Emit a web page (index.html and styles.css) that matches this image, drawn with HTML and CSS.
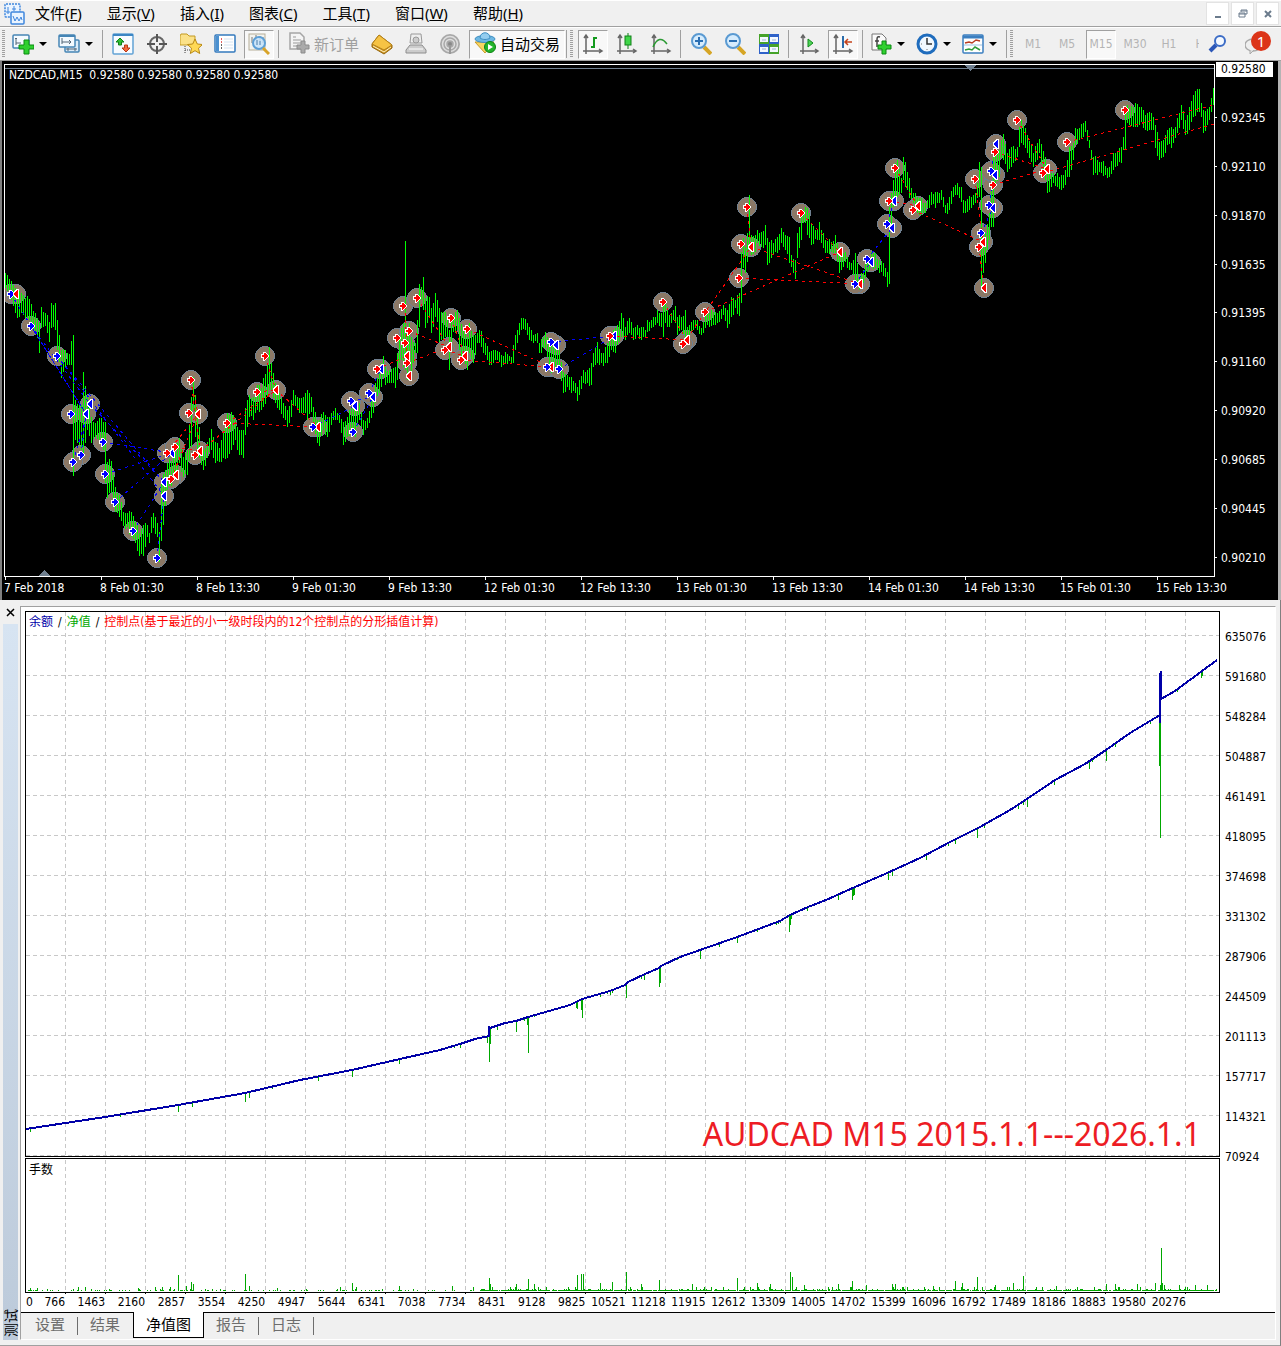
FILE: index.html
```html
<!DOCTYPE html>
<html lang="zh-CN">
<head>
  <meta charset="UTF-8" />
  <meta name="viewport" content="width=device-width, initial-scale=1.0" />
  <title>NZDCAD,M15</title>
  <link rel="stylesheet" href="styles.css">
</head>
<body>

  <!-- Menu -->
  <header class="menubar">
    <svg class="app-icon" viewBox="0 0 22 22" width="22" height="22">
      <rect x="1" y="1" width="15" height="13" rx="1" fill="#eaf4ff" stroke="#3f86dd" stroke-width="1.5" stroke-dasharray="2 1"/>
      <path d="M4 4v7M2 9h4M10 3v5M8 6h4" stroke="#3f86dd" fill="none"/>
      <rect x="7" y="9" width="13" height="12" rx="1" fill="#eaf4ff" stroke="#3f86dd" stroke-width="1.5"/>
      <path d="M9 13l2 5 2-4 2 4 2-4 1 3" stroke="#3f86dd" fill="none"/>
    </svg>
    <nav class="menu">
      <a href="#">文件(<u>F</u>)</a>
      <a href="#">显示(<u>V</u>)</a>
      <a href="#">插入(<u>I</u>)</a>
      <a href="#">图表(<u>C</u>)</a>
      <a href="#">工具(<u>T</u>)</a>
      <a href="#">窗口(<u>W</u>)</a>
      <a href="#">帮助(<u>H</u>)</a>
    </nav>
    <div class="win-buttons">
      <button aria-label="最小化"><svg viewBox="0 0 12 12" width="12" height="12"><path d="M3 9h6" stroke="#6b7b8c" stroke-width="2"/></svg></button>
      <button aria-label="还原"><svg viewBox="0 0 12 12" width="12" height="12"><path d="M4 4V2h6v4H8M2 5h6v4H2zM2 6h6M4 3h6" stroke="#6b7b8c" fill="none"/></svg></button>
      <button aria-label="关闭"><svg viewBox="0 0 12 12" width="12" height="12"><path d="M3 3l6 6M9 3l-6 6" stroke="#6b7b8c" stroke-width="2"/></svg></button>
    </div>
  </header>

  <!-- Toolbar -->
  <div class="toolbar">
    <span class="grip"></span>
    <button class="tool drop" aria-label="新图表">
      <svg viewBox="0 0 22 22" width="22" height="22"><rect x="1" y="2" width="16" height="13" rx="1" fill="#f4faff" stroke="#4585b5" stroke-width="1.5"/><path d="M4 5v7M3 6l1-1 1 1M4 10h5" stroke="#567" fill="none"/><path d="M12 7h5v5h5v4h-5v5h-5v-5H7v-4h5z" fill="#2fd02f" stroke="#0b8a12"/></svg>
      <i class="caret"></i>
    </button>
    <button class="tool drop" aria-label="图表组">
      <svg viewBox="0 0 22 22" width="22" height="22"><rect x="7" y="7" width="14" height="12" rx="1" fill="#dcecf9" stroke="#4585b5" stroke-width="1.5"/><rect x="1" y="2" width="16" height="12" rx="1" fill="#f4faff" stroke="#4585b5" stroke-width="1.5"/><path d="M1 3h16" stroke="#4585b5" stroke-width="2"/><path d="M4 5v6M4 9h9M11 7l2 2-2 2M8 16h11M10 15v3M17 15v3" stroke="#567" fill="none"/></svg>
      <i class="caret"></i>
    </button>
    <span class="sep"></span>
    <button class="tool" aria-label="市场报价">
      <svg viewBox="0 0 22 22" width="22" height="22"><rect x="1" y="1" width="20" height="20" rx="1" fill="#f7fbff" stroke="#62a2d5" stroke-width="1.5"/><path d="M1 2h20" stroke="#3c86c4" stroke-width="2"/><path d="M8 5l4 4H9.500v3h-3V9H4z" fill="#2fbf35" stroke="#12801a"/><path d="M14 19l-4-4h2.500v-3h3v3H18z" fill="#f4683c" stroke="#b83a17"/></svg>
    </button>
    <button class="tool" aria-label="数据窗口">
      <svg viewBox="0 0 22 22" width="22" height="22"><circle cx="11" cy="11" r="7" fill="none" stroke="#666" stroke-width="2"/><path d="M11 1v8M11 13v8M1 11h8M13 11h8" stroke="#555" stroke-width="2"/></svg>
    </button>
    <button class="tool" aria-label="导航">
      <svg viewBox="0 0 22 22" width="22" height="22"><path d="M0 3l1-2h6l2 2h6v9H0z" fill="#fbe188" stroke="#c39a22"/><path d="M5 13v8M5 17h5" stroke="#444" stroke-dasharray="1 1"/><path d="M15 6l2.300 5 5.200.5-4 3.700 1.200 5.300-4.700-2.800-4.700 2.800 1.200-5.300-4-3.700 5.200-.5z" fill="#ffd955" stroke="#b98a15"/></svg>
    </button>
    <button class="tool" aria-label="终端">
      <svg viewBox="0 0 22 22" width="22" height="22"><rect x="1" y="2" width="20" height="17" rx="1" fill="#fff" stroke="#3379bd" stroke-width="1.500"/><path d="M2 3h3v15H2z" fill="#4a90d0"/><path d="M7 6h1M7 9h1" stroke="#e03030" stroke-width="1.500"/><path d="M7 12h1M7 15h1" stroke="#333" stroke-width="1.500"/><path d="M10 6h9M10 9h9M10 12h9M10 15h9" stroke="#d5e4f2"/></svg>
    </button>
    <button class="tool pressed" aria-label="策略测试">
      <svg viewBox="0 0 22 22" width="22" height="22"><rect x="1" y="1" width="16" height="16" fill="#f3f3ee" stroke="#b5ae98"/><path d="M4 4v6M8 2v5M12 3v5M15 4v6" stroke="#777"/><circle cx="11" cy="10" r="6" fill="#c4e2fa" fill-opacity=".85" stroke="#5d9fd6" stroke-width="2"/><path d="M9 7v5M12 8v4" stroke="#4a7da8"/><path d="M15 15l6 6" stroke="#d8a42a" stroke-width="3"/></svg>
    </button>
    <span class="sep"></span>
    <button class="tool order" disabled>
      <svg viewBox="0 0 22 22" width="22" height="22"><path d="M2 1h10l4 4v12H2z" fill="#f4f4f4" stroke="#a5a5a5" stroke-width="1.500"/><path d="M5 5h3M5 8h8M5 11h8M5 14h5" stroke="#999"/><path d="M13 9h4v4h4v4h-4v4h-4v-4H9v-4h4z" fill="#aaa" stroke="#8b8b8b"/></svg>
      新订单
    </button>
    <button class="tool" aria-label="MetaEditor">
      <svg viewBox="0 0 22 22" width="22" height="22"><path d="M1 11L8 2l13 10v3l-8 6L1 14z" fill="#c98f1c" stroke="#96670d"/><path d="M1 11L8 2l13 10-8 5z" fill="#f6c344" stroke="#b5821a"/><path d="M2 13l11 6 7-5" stroke="#fff3c2" fill="none"/></svg>
    </button>
    <button class="tool" aria-label="选项" disabled>
      <svg viewBox="0 0 22 22" width="22" height="22"><path d="M6 1h10l1 9H5z" fill="#eee" stroke="#999"/><circle cx="11" cy="7" r="3" fill="#ccc" stroke="#999"/><path d="M5 12h12l4 5v3H1v-3z" fill="#ccc" stroke="#8e8e8e"/><path d="M4 16h14" stroke="#fff"/></svg>
    </button>
    <button class="tool" aria-label="信号" disabled>
      <svg viewBox="0 0 22 22" width="22" height="22"><circle cx="11" cy="11" r="10" fill="#a8a8a8"/><g fill="none" stroke="#dedede" stroke-width="1.500"><circle cx="11" cy="11" r="7.500"/><circle cx="11" cy="11" r="4.500"/></g><circle cx="11" cy="11" r="2" fill="#888"/><path d="M11 12v9" stroke="#999" stroke-width="2"/></svg>
    </button>
    <button class="tool pressed auto">
      <svg viewBox="0 0 22 22" width="22" height="22"><path d="M1 10l10 11 9-11z" fill="#f8d562" stroke="#c89a28"/><ellipse cx="11" cy="7" rx="10" ry="3.500" fill="#6db7e2" stroke="#3f8fc2"/><path d="M6 6c0-7 10-7 10 0-3 2-7 2-10 0z" fill="#93cdef" stroke="#3f8fc2"/><circle cx="16" cy="15" r="5.500" fill="#23b52b" stroke="#0d8314"/><path d="M14 12l5 3-5 3z" fill="#fff"/></svg>
      自动交易
    </button>
    <span class="sep tight"></span>
    <span class="grip"></span>
    <button class="tool pressed" aria-label="柱状图">
      <svg viewBox="0 0 22 22" width="22" height="22"><path d="M4 2v19M1 18h19M2 5l2-3 2 3M17 16l3 2-3 2" stroke="#666" stroke-width="1.500" fill="none"/><path d="M12 4v11M12 5h3M9 14h3" stroke="#159a1f" stroke-width="2"/></svg>
    </button>
    <button class="tool" aria-label="阴阳烛">
      <svg viewBox="0 0 22 22" width="22" height="22"><path d="M4 2v19M1 18h19M2 5l2-3 2 3M17 16l3 2-3 2" stroke="#666" stroke-width="1.500" fill="none"/><path d="M12 0v16" stroke="#118018"/><rect x="9" y="3" width="6" height="9" fill="#3fd548" stroke="#118018"/></svg>
    </button>
    <button class="tool" aria-label="折线图">
      <svg viewBox="0 0 22 22" width="22" height="22"><path d="M4 2v19M1 18h19M2 5l2-3 2 3M17 16l3 2-3 2" stroke="#666" stroke-width="1.500" fill="none"/><path d="M3 14c4-9 9-10 14-3" stroke="#2b9a33" stroke-width="1.500" fill="none"/></svg>
    </button>
    <span class="sep"></span>
    <button class="tool" aria-label="放大">
      <svg viewBox="0 0 22 22" width="22" height="22"><path d="M14 14l7 7" stroke="#d6a525" stroke-width="4"/><circle cx="9" cy="8" r="7" fill="#d6ecfd" stroke="#5a9ad2" stroke-width="2"/><path d="M5 8h8M9 4v8" stroke="#2a6fb3" stroke-width="2"/></svg>
    </button>
    <button class="tool" aria-label="缩小">
      <svg viewBox="0 0 22 22" width="22" height="22"><path d="M14 14l7 7" stroke="#d6a525" stroke-width="4"/><circle cx="9" cy="8" r="7" fill="#d6ecfd" stroke="#5a9ad2" stroke-width="2"/><path d="M5 8h8" stroke="#2a6fb3" stroke-width="2"/></svg>
    </button>
    <button class="tool" aria-label="平铺窗口">
      <svg viewBox="0 0 22 22" width="22" height="22"><path d="M1 1h10v10H1zM11 11h10v10H11z" fill="#46a329"/><path d="M11 1h10v10H11zM1 11h10v10H1z" fill="#2f62c9"/><path d="M2 4h8v5H2zM12 4h8v5h-8zM2 14h8v5H2zM12 14h8v5h-8z" fill="#f4f9ff"/><path d="M4 7h4M14 7h4M4 16h4M14 16h4" stroke="#9bb5d3"/></svg>
    </button>
    <span class="sep"></span>
    <button class="tool" aria-label="自动滚动">
      <svg viewBox="0 0 22 22" width="22" height="22"><path d="M5 2v19M2 18h18M3 5l2-3 2 3M17 16l3 2-3 2" stroke="#666" stroke-width="1.500" fill="none"/><path d="M10 6l5 4-5 4z" fill="#4fd658" stroke="#118a1b"/></svg>
    </button>
    <button class="tool pressed" aria-label="图表平移">
      <svg viewBox="0 0 22 22" width="22" height="22"><path d="M4 2v19M1 18h19M2 5l2-3 2 3M17 16l3 2-3 2" stroke="#666" stroke-width="1.500" fill="none"/><path d="M11 3v12" stroke="#2b6cab" stroke-width="2"/><path d="M20 9h-6M16 6l-3 3 3 3" stroke="#c4431c" stroke-width="1.500" fill="none"/></svg>
    </button>
    <span class="sep"></span>
    <button class="tool drop" aria-label="指标列表">
      <svg viewBox="0 0 22 22" width="22" height="22"><path d="M2 1h10l4 4v12H2z" fill="#fafafa" stroke="#777"/><path d="M10 4c-3-1-3 1-3 3v7M5 8h4" stroke="#444" stroke-width="1.500" fill="none"/><path d="M12 8h4v4h5v4h-5v5h-4v-5H8v-4h4z" fill="#2fd02f" stroke="#0b8a12"/></svg>
      <i class="caret"></i>
    </button>
    <button class="tool drop" aria-label="时段">
      <svg viewBox="0 0 22 22" width="22" height="22"><circle cx="11" cy="11" r="9" fill="#f2f8fd" stroke="#1f6cbd" stroke-width="3"/><path d="M11 5v6h5" stroke="#333" stroke-width="1.500" fill="none"/><path d="M5 11h1M11 16v1" stroke="#777"/></svg>
      <i class="caret"></i>
    </button>
    <button class="tool drop" aria-label="模板">
      <svg viewBox="0 0 22 22" width="22" height="22"><rect x="1" y="2" width="20" height="18" rx="1" fill="#fff" stroke="#3b7fc0" stroke-width="1.500"/><path d="M1 4h20" stroke="#3b7fc0" stroke-width="3"/><path d="M3 10l4-1 3 1 4-3 4 1" stroke="#b93c22" stroke-width="1.500" fill="none"/><path d="M2 12h18" stroke="#9cc0e0"/><path d="M3 17l4-1 3 1 3-3 5 3" stroke="#2e9b38" stroke-width="1.500" fill="none"/></svg>
      <i class="caret"></i>
    </button>
    <span class="sep"></span>
    <span class="grip"></span>
    <div class="periods">
      <button class="tool period">M1</button>
      <button class="tool period">M5</button>
      <button class="tool period pressed">M15</button>
      <button class="tool period">M30</button>
      <button class="tool period">H1</button>
      <button class="tool period">H4</button>
    </div>
    <div class="tool-end">
      <button class="tool" aria-label="搜索">
        <svg viewBox="0 0 22 22" width="22" height="22"><path d="M9 12l-6 6" stroke="#2c57b8" stroke-width="4"/><circle cx="13" cy="8" r="5" fill="#f4f9ff" stroke="#3c6cc6" stroke-width="2"/></svg>
      </button>
      <button class="tool chat" aria-label="消息">
        <svg viewBox="0 0 22 22" width="22" height="22"><ellipse cx="8" cy="12" rx="8" ry="6" fill="#eee" stroke="#aaa" stroke-width="1.500"/><path d="M5 17v4l4-4" fill="#ddd" stroke="#aaa"/></svg>
        <span class="badge">1</span>
      </button>
    </div>
  </div>

  <!-- Price chart -->
  <main class="chart">
    <div class="chart-title">NZDCAD,M15&nbsp; 0.92580 0.92580 0.92580 0.92580</div>
    <svg id="price" class="plot" viewBox="4 61 1211 519"></svg>
    <div class="price-axis">
      <span class="current">0.92580</span><span>0.92345</span><span>0.92110</span><span>0.91870</span><span>0.91635</span><span>0.91395</span><span>0.91160</span><span>0.90920</span><span>0.90685</span><span>0.90445</span><span>0.90210</span>
    </div>
    <div class="time-axis">
      <span>7 Feb 2018</span><span>8 Feb 01:30</span><span>8 Feb 13:30</span><span>9 Feb 01:30</span><span>9 Feb 13:30</span><span>12 Feb 01:30</span><span>12 Feb 13:30</span><span>13 Feb 01:30</span><span>13 Feb 13:30</span><span>14 Feb 01:30</span><span>14 Feb 13:30</span><span>15 Feb 01:30</span><span>15 Feb 13:30</span>
    </div>
  </main>

  <!-- Strategy tester -->
  <section class="tester">
    <aside class="side">
      <button class="close" aria-label="关闭"><svg viewBox="0 0 10 10" width="10" height="10"><path d="M1 1l7 7M8 1l-7 7" stroke="#000" stroke-width="1.500"/></svg></button>
      <div class="side-title"><span>测试</span></div>
    </aside>
    <div class="panel">
      <div class="graph">
        <div class="legend"><span class="balance">余额</span><i>/</i><span class="equity">净值</span><i>/</i><span class="control">控制点(基于最近的小一级时段内的12个控制点的分形插值计算)</span></div>
        <svg id="equity" class="plot" viewBox="21 607 1199 688"></svg>
        <div class="lots">手数</div>
        <div class="caption">AUDCAD M15 2015.1.1---2026.1.1</div>
        <div class="value-axis">
          <span>635076</span><span>591680</span><span>548284</span><span>504887</span><span>461491</span><span>418095</span><span>374698</span><span>331302</span><span>287906</span><span>244509</span><span>201113</span><span>157717</span><span>114321</span><span>70924</span>
        </div>
        <div class="trade-axis">
          <span class="first"><b>0</b><b>766</b></span><span>1463</span><span>2160</span><span>2857</span><span>3554</span><span>4250</span><span>4947</span><span>5644</span><span>6341</span><span>7038</span><span>7734</span><span>8431</span><span>9128</span><span>9825</span><span>10521</span><span>11218</span><span>11915</span><span>12612</span><span>13309</span><span>14005</span><span>14702</span><span>15399</span><span>16096</span><span>16792</span><span>17489</span><span>18186</span><span>18883</span><span>19580</span><span>20276</span>
        </div>
      </div>
      <nav class="tabs">
        <button>设置</button>
        <button>结果</button>
        <button class="active">净值图</button>
        <button>报告</button>
        <button>日志</button>
      </nav>
    </div>
  </section>

  <script src="charts.js"></script>
</body>
</html>
```
FILE: styles.css
```css
* {
  box-sizing: border-box;
}

body {
  margin: 0;
  background: #f0f0f0;
  color: #000;
  font-family: "Noto Sans", "Noto Sans CJK SC", sans-serif;
  font-size: 15px;
}

button {
  border: 0;
  padding: 0;
  background: none;
  font: inherit;
  color: inherit;
}

/* menu */
.menubar {
  display: flex;
  align-items: center;
  height: 27px;
  padding: 0 2px 0 4px;
  border-top: 1px solid #fff;
  border-bottom: 1px solid #a0a0a0;
}

.menu {
  display: flex;
  gap: 25px;
  margin-left: 9px;
  padding-bottom: 2px;
  line-height: 22px;
}

.menu a {
  color: #000;
  text-decoration: none;
  white-space: nowrap;
}

.win-buttons {
  display: flex;
  gap: 2px;
  margin-left: auto;
}

.win-buttons button {
  display: flex;
  align-items: center;
  justify-content: center;
  width: 23px;
  height: 23px;
  background: #fff;
  border: 1px solid #e3e3e3;
}

/* toolbar */
.toolbar {
  display: flex;
  align-items: center;
  height: 34px;
  padding-left: 2px;
  border-top: 1px solid #fff;
  border-bottom: 1px solid #a0a0a0;
  overflow: hidden;
}

.grip {
  flex: none;
  width: 3px;
  height: 28px;
  margin-right: 3px;
  background: repeating-linear-gradient(#a0a0a0 0 1px, #f0f0f0 1px 2px);
}

.sep {
  flex: none;
  width: 1px;
  height: 28px;
  margin: 0 3px 0 2px;
  background: #a0a0a0;
}

.sep.tight {
  margin-left: 0;
}

.tool {
  display: flex;
  flex: none;
  align-items: center;
  justify-content: center;
  width: 30px;
  height: 29px;
  margin: 0 2px;
  white-space: nowrap;
}

.tool svg {
  flex: none;
}

.tool.pressed {
  background: #f8f8f8;
  border: 1px solid;
  border-color: #a0a0a0 #fff #fff #a0a0a0;
}

.tool.drop {
  width: 46px;
  margin: 0;
  padding: 0 8px 0 4px;
  gap: 5px;
}

.caret {
  border: 4px solid transparent;
  border-top-color: #000;
  border-bottom: 0;
}

.tool.order {
  width: 79px;
  gap: 4px;
  padding-bottom: 2px;
  color: #a0a0a0;
}

.tool.auto {
  width: 96px;
  gap: 4px;
  margin-right: 1px;
  padding-bottom: 2px;
}

.periods {
  display: flex;
  flex: 0 0 183px;
  overflow: hidden;
}

.tool.period {
  font-family: "DejaVu Sans Condensed", "Noto Sans", sans-serif;
  font-size: 12px;
  color: #b4b4b4;
}

.tool-end {
  display: flex;
  margin-left: auto;
  padding-right: 8px;
  gap: 4px;
}

.tool.chat {
  position: relative;
}

.badge {
  position: absolute;
  top: 1px;
  right: 0;
  width: 20px;
  height: 20px;
  border-radius: 10px;
  background: #dc3418;
  color: #fff;
  line-height: 20px;
}

/* price chart */
.chart {
  position: relative;
  display: grid;
  grid-template-columns: 1fr 63px;
  padding-left: 2px;
  background: #000;
  color: #fff;
  border-left: 2px solid #808080;
  border-right: 3px solid #b4b4b4;
}

.chart,
.graph {
  font-family: "DejaVu Sans Condensed", "Noto Sans", "Noto Sans CJK SC", sans-serif;
  font-size: 12px;
  line-height: 15px;
}

.plot {
  display: block;
  width: 100%;
  height: auto;
}

.chart-title {
  position: absolute;
  top: 7px;
  left: 7px;
}

.price-axis {
  display: flex;
  flex-direction: column;
  justify-content: space-between;
  padding: 1px 0 14px;
}

.price-axis span::before {
  content: "";
  display: inline-block;
  width: 2px;
  height: 1px;
  margin-right: 4px;
  background: #fff;
  vertical-align: 4px;
}

.price-axis .current {
  width: 57px;
  margin-left: 1px;
  padding-left: 5px;
  background: #fff;
  color: #000;
}

.price-axis .current::before {
  display: none;
}

.time-axis {
  display: grid;
  grid-template-columns: repeat(12, minmax(0, 96fr)) minmax(0, 59fr);
  height: 20px;
  padding-top: 1px;
  white-space: nowrap;
}

/* tester */
.tester {
  display: flex;
  padding-bottom: 5px;
  background: #f0f0f0;
  border-right: 1px solid #808080;
  border-bottom: 2px solid #a0a0a0;
}

.side {
  display: flex;
  flex-direction: column;
  width: 20px;
  padding: 0 2px 0 3px;
}

.close {
  height: 24px;
  line-height: 10px;
}

.side-title {
  flex: 1;
  display: flex;
  align-items: flex-end;
  background: linear-gradient(#d7e4f2, #bccada);
}

.side-title span {
  writing-mode: vertical-rl;
  text-orientation: sideways;
  transform: rotate(180deg);
  line-height: 15px;
  font-size: 14px;
  padding-top: 3px;
}

.panel {
  flex: 1;
  min-width: 0;
  margin: 6px 4px 0 0;
  border-left: 1px solid #a0a0a0;
  border-top: 1px solid #a0a0a0;
  border-right: 1px solid #fff;
  border-bottom: 1px solid #fff;
}

.graph {
  position: relative;
  display: grid;
  grid-template-columns: 1fr 55px;
  background: #fff;
  border-bottom: 1px solid #000;
}

.legend,
.lots {
  position: absolute;
  left: 8px;
}

.legend {
  top: 8px;
}

.legend i {
  margin: 0 5px;
  font-style: normal;
}

.lots {
  bottom: 134px;
}

.balance {
  color: #0000a8;
}

.equity {
  color: #00a800;
}

.control {
  color: #f00;
}

.caption {
  position: absolute;
  right: 74px;
  bottom: 156px;
  font-family: "Noto Sans", sans-serif;
  font-size: 32px;
  line-height: 44px;
  color: #ed1c24;
}

.value-axis {
  display: flex;
  flex-direction: column;
  justify-content: space-between;
  padding: 23px 0 130px 5px;
}

.trade-axis {
  display: grid;
  grid-template-columns: repeat(29, minmax(0, 40fr)) minmax(0, 34fr);
  height: 17px;
  padding-left: 4px;
  line-height: 14px;
}

.trade-axis span {
  text-align: right;
  white-space: nowrap;
}

.trade-axis .first {
  display: flex;
  justify-content: space-between;
  padding-left: 1px;
}

.trade-axis b {
  font-weight: normal;
}

.tabs {
  display: flex;
  height: 26px;
  padding-left: 2px;
  color: #6d6d6d;
}

.tabs button {
  position: relative;
  height: 25px;
  padding: 0 13px 3px 12px;
  line-height: 20px;
}

.tabs button:not(.active)::after {
  content: "";
  position: absolute;
  top: 4px;
  right: 0;
  width: 1px;
  height: 18px;
  background: #6d6d6d;
}

.tabs button:nth-child(2)::after {
  display: none;
}

.tabs .active {
  margin-top: -1px;
  height: 26px;
  padding: 0 12px 2px;
  background: #fff;
  border: 1px solid #000;
  border-top: 0;
  color: #000;
}
```
FILE: charts.js
```js
const NS = 'http://www.w3.org/2000/svg';

function add(parent, name, attrs) {
  const el = document.createElementNS(NS, name);
  for (const key in attrs) el.setAttribute(key, attrs[key]);
  parent.appendChild(el);
  return el;
}

// repeatable noise, so that the chart is the same on every load
let seed = 7;
function rnd() {
  seed = (seed * 16807) % 2147483647;
  return seed / 2147483647;
}

// x, high, low
const bars = [
  5,273,288, 11,281,300, 17,290,318, 21,293,313, 29,299,320, 37,318,338, 39,322,353, 41,307,328, 45,313,326, 49,322,342,
  51,303,328, 55,303,330, 57,320,350, 61,350,378, 65,350,367, 69,354,365, 71,341,365, 73,335,476, 75,400,440, 81,405,450, 83,372,453,
  87,397,430, 91,417,443, 95,423,437, 101,418,443, 103,422,450, 105,422,483, 107,462,498, 111,461,493, 115,487,512,
  119,495,517, 123,512,526, 127,513,527, 131,512,537, 135,522,543, 139,533,556, 143,525,556, 147,525,537, 149,533,543,
  151,517,533, 153,513,528, 157,523,537, 159,532,562, 161,480,541, 167,463,490, 173,457,480, 177,443,480, 179,438,463,
  183,457,477, 187,450,475, 191,397,447, 193,377,410, 195,395,437, 197,410,453, 201,447,465, 203,450,470, 207,442,458,
  211,429,450, 215,442,463, 219,448,462, 223,430,458, 227,413,458, 231,412,450, 235,420,440, 239,430,455, 243,430,458,
  245,408,435, 249,395,417, 253,397,420, 257,385,410, 261,388,410, 263,378,407, 267,365,397, 269,347,390, 271,363,390,
  275,383,403, 279,393,410, 283,403,418, 287,410,427, 291,400,417, 293,390,405, 297,397,410, 301,398,413, 305,393,413,
  307,390,420, 311,397,412, 317,420,443, 319,420,446, 323,412,430, 327,417,437, 331,413,425, 335,408,420, 339,415,423,
  341,419,433, 343,422,445, 347,417,437, 351,407,433, 355,410,437, 359,403,420, 363,420,435, 367,418,428, 371,400,418,
  375,383,403, 379,370,393, 381,363,387, 383,356,377, 385,367,385, 389,370,383, 393,368,383, 395,367,388, 397,353,380,
  399,337,363, 401,328,360, 403,323,367, 405,241,370, 407,327,380, 409,323,353, 411,337,377, 415,343,353, 417,320,353,
  419,284,327, 421,287,300, 423,277,310, 425,298,328, 429,297,317, 431,308,333, 433,303,327, 435,293,317, 437,300,322,
  439,308,342, 443,312,340, 447,317,337, 449,330,370, 451,315,350, 453,317,332, 457,310,330, 459,318,350, 463,327,360,
  467,337,370, 469,323,353, 473,335,363, 477,333,343, 481,331,347, 485,343,355, 489,352,365, 493,350,363, 497,351,360,
  501,355,367, 505,352,363, 511,357,363, 513,345,363, 515,335,350, 517,330,343, 521,318,330, 525,319,330, 529,327,340,
  533,335,343, 537,333,343, 539,343,353, 545,332,348, 551,340,373, 555,347,367, 559,350,373, 563,372,393, 567,375,387,
  571,377,393, 575,383,393, 577,387,401, 579,380,395, 583,370,383, 587,370,383, 591,363,385, 593,353,367, 597,342,363,
  601,353,363, 603,353,366, 607,343,363, 611,333,350, 615,328,353, 617,325,345, 621,313,337, 625,327,340, 629,318,333,
  633,328,340, 637,325,335, 641,327,340, 645,330,338, 647,320,332, 651,320,328, 655,317,325, 657,310,323, 661,313,327,
  663,303,337, 665,303,323, 669,315,327, 673,310,320, 675,306,323, 677,317,335, 681,317,330, 685,310,337, 687,327,340,
  693,320,330, 697,320,330, 701,328,335, 705,315,328, 709,313,327, 713,312,325, 717,313,323, 723,305,315, 727,310,328,
  731,297,317, 735,300,308, 739,293,316, 741,252,303, 743,238,268, 745,247,273, 747,233,262, 749,195,247, 751,235,255,
  755,235,252, 757,230,243, 761,232,247, 765,225,245, 767,238,265, 769,242,263, 773,243,255, 777,237,253, 781,228,243,
  785,235,250, 789,237,263, 791,255,267, 795,260,279, 797,233,258, 799,227,248, 801,217,240, 803,210,223, 805,207,223,
  807,208,235, 811,223,245, 817,230,240, 819,222,240, 821,230,243, 825,240,253, 831,242,252, 835,235,253, 839,252,273,
  845,252,262, 847,257,268, 851,263,270, 853,260,275, 855,253,282, 859,277,290, 863,270,283, 867,262,272, 871,252,267,
  875,253,268, 879,260,273, 885,268,277, 887,272,287, 889,207,284, 891,193,228, 893,180,207, 895,163,197, 897,160,197,
  901,178,193, 903,157,180, 905,162,187, 909,178,198, 913,193,203, 917,197,213, 925,203,213, 931,192,205, 935,192,208,
  941,190,200, 945,205,213, 949,197,210, 953,187,197, 957,183,195, 961,187,202, 963,200,213, 971,197,208, 975,193,203,
  977,183,198, 979,162,197, 981,167,287, 983,240,273, 985,233,263, 989,213,240, 991,190,227, 993,157,227, 995,150,187,
  999,150,177, 1001,140,158, 1003,134,160, 1007,153,172, 1011,147,167, 1017,147,157, 1019,127,147, 1021,120,143,
  1027,135,153, 1033,153,167, 1037,143,160, 1039,139,153, 1045,157,180, 1047,170,193, 1053,173,183, 1059,177,189,
  1063,175,188, 1067,160,177, 1069,147,177, 1073,143,160, 1075,128,145, 1079,128,140, 1085,121,132, 1091,150,160,
  1093,157,175, 1101,162,173, 1109,167,177, 1113,153,170, 1121,147,163, 1123,137,150, 1125,113,150, 1127,105,123,
  1133,107,127, 1137,104,127, 1141,107,122, 1145,115,130, 1149,112,130, 1153,117,130, 1155,125,148, 1159,142,160,
  1163,140,157, 1167,130,145, 1171,127,148, 1175,127,138, 1179,113,128, 1181,105,120, 1185,120,135, 1189,107,130,
  1193,95,117, 1197,89,112, 1199,89,112, 1201,103,117, 1203,110,133, 1209,107,120, 1213,88,105, 1215,88,105
];

// R/B open a position, r/b close it
const deals = `11,294,B 16,294,r 31,326,B 57,356,B 71,414,B 90,404,b 86,414,b 81,455,B 73,462,B 103,442,B 105,474,B 115,502,B
133,531,B 157,558,B 164,482,b 164,496,b 172,453,b 167,453,R 175,447,R 176,475,r 171,479,R 191,380,R 198,414,r 189,413,R
200,451,r 195,455,R 227,423,R 257,392,R 276,390,r 265,356,R 318,427,r 313,427,B 355,406,b 351,401,B 353,432,B 373,397,b
369,393,B 381,369,b 377,369,R 397,338,R 403,306,R 417,298,R 409,331,R 405,343,R 407,356,r 407,363,R 409,376,r 451,318,R
467,329,R 449,347,r 445,350,R 465,356,r 461,360,R 551,367,r 547,367,B 559,369,B 556,345,b 551,342,B 614,336,b 610,336,R
663,302,R 687,340,r 683,344,R 705,312,R 739,278,R 751,247,r 741,244,R 747,207,R 801,213,R 840,252,r 860,284,r 855,284,B
871,262,b 867,259,B 892,228,b 887,224,B 894,201,b 889,201,R 895,168,R 918,206,r 913,210,R 975,179,R 981,233,B 983,242,r
979,247,R 984,288,r 993,208,b 989,205,B 993,185,R 995,175,b 991,171,B 996,144,b 995,152,R 1017,120,R 1047,169,r 1043,173,R
1067,142,R 1125,110,R`.split(/\s+/).map(s => s.split(','));

const blueLines = 'M11 294L86 414M31 326L90 404M31 326L86 414M57 356L164 482M57 356L164 496M90 404L164 482M81 455L86 414' +
  'M73 462L90 404M103 442L172 453M105 474L172 453M115 502L172 453M133 531L164 482M157 558L164 496M313 427L355 406' +
  'M351 401L373 397M353 432L373 397M369 393L381 369M551 342L614 336M559 369L614 336M855 284L871 262M867 259L892 228' +
  'M887 224L894 201M981 233L993 208M989 205L995 175M991 171L996 144';

const redLines = 'M167 453L198 414M175 447L200 451M171 479L198 414M191 380L200 451M191 380L198 414M195 455L276 390' +
  'M227 423L276 390M227 423L318 427M265 356L276 390M257 392L276 390M276 390L318 427M377 369L407 356M405 306L407 356' +
  'M409 331L449 347M407 363L449 347M417 298L449 347M451 318L465 356M467 329L551 367M461 360L551 367M445 350L465 356' +
  'M610 336L687 340M663 302L687 340M683 344L751 247M705 312L840 252M739 278L860 284M741 244L751 247M747 207L751 247' +
  'M751 247L860 284M801 213L840 252M889 201L918 206M895 168L918 206M913 210L983 242M975 179L983 242M979 247L984 288' +
  'M995 152L1047 169M993 185L1047 169M1017 120L1047 169M1043 173L1214 124M1067 142L1214 105';

function drawPrice() {
  const svg = document.getElementById('price');
  svg.setAttribute('shape-rendering', 'crispEdges');

  for (const [x, y] of deals) {
    add(svg, 'circle', { cx: x, cy: y, r: 9.5, fill: '#8b7866', stroke: '#708090' });
  }

  let d = '';
  for (let i = 0; i < bars.length - 3; i += 3) {
    const [x0, h0, l0, x1, h1, l1] = bars.slice(i, i + 6);
    for (let x = x0; x < x1; x += 2) {
      const t = (x - x0) / (x1 - x0);
      const j = t ? 5 : 0;
      const h = Math.round(h0 + (h1 - h0) * t + (rnd() - 0.5) * j);
      const l = Math.round(l0 + (l1 - l0) * t + (rnd() - 0.5) * j);
      d += `M${x + 0.5} ${h}V${l}`;
    }
  }
  add(svg, 'path', { d: d, stroke: '#00ff00', fill: 'none' });

  add(svg, 'path', { d: blueLines, stroke: '#0000ff', 'stroke-dasharray': '3 4', fill: 'none' });
  add(svg, 'path', { d: redLines, stroke: '#ff0000', 'stroke-dasharray': '3 4', fill: 'none' });

  for (const [x, y, type] of deals) {
    add(svg, 'path', {
      d: /[RB]/.test(type) ? 'M-3 -1h2v-2.500h1l3 3.500-3 3.500h-1v-2.500h-2z' : 'M2 -4v8h-1l-3.500-4 3.500-4z',
      transform: `translate(${x} ${y})`,
      fill: /[Rr]/.test(type) ? '#ff0000' : '#0000ff',
      stroke: '#fff',
      'stroke-width': 2,
      'paint-order': 'stroke'
    });
  }

  // frame, period line and shift marks
  add(svg, 'path', { d: 'M5 68.500H1214', stroke: '#708090' });
  add(svg, 'path', { d: 'M964 65h13l-6.500 6zM38 576h13l-6.500-6z', fill: '#708090' });
  let ticks = '';
  for (let x = 5.5; x < 1214; x += 96) ticks += `M${x} 577v3`;
  add(svg, 'path', { d: 'M4.500 64.500H1214.500V576.500H4.500z' + ticks, stroke: '#fff', fill: 'none' });
}

const balance = '26,1129 105,1117 178,1105 245,1093 300,1080 352,1070 400,1059 440,1050 460,1044 475,1039 489,1036 489,1026 490,1028 ' +
  '505,1023 516,1021 528,1017 570,1005 582,999 610,991 625,985 628,982 645,974 659,968 661,966 680,957 700,950 740,936 780,921 ' +
  '790,915 808,907 826,900 855,887 885,874 920,858 950,842 980,827 1010,810 1027,799 1055,780 1085,764 1106,750 1130,733 1160,715 ' +
  '1160,723 1160,675 1161,671 1161,699 1175,691 1202,671 1217,660';

// x, lowest equity
const dips = [30,1132, 120,1117, 178,1112, 192,1107, 245,1102, 249,1098, 272,1089, 318,1081, 352,1077, 399,1064, 454,1048, 460,1048,
  487,1043, 489,1062, 490,1044, 497,1030, 516,1032, 524,1021, 527,1025, 528,1053, 534,1017, 576,1008, 577,1009, 581,1010, 582,1018,
  600,997, 607,994, 610,995, 612,993, 626,998, 641,979, 644,980, 659,987, 660,983, 677,960, 700,959, 719,947, 737,943, 757,932,
  776,925, 778,924, 780,923, 789,932, 790,925, 791,919, 807,911, 838,900, 840,895, 852,900, 853,896, 854,895, 888,880, 892,876, 926,860,
  948,846, 955,844, 977,838, 984,828, 1018,809, 1023,805, 1027,807, 1054,785, 1089,769, 1092,762, 1106,761, 1115,747, 1150,724,
  1159,766, 1160,838, 1177,692, 1201,678, 1202,676];

// x, top of the lot bar
const lots = [30,1288, 37,1288, 138,1288, 178,1275, 186,1286, 191,1282, 193,1284, 245,1274, 249,1286, 277,1288, 352,1283, 356,1287,
  399,1286, 452,1286, 489,1278, 490,1284, 516,1284, 528,1279, 534,1284, 577,1275, 581,1274, 583,1274, 600,1283, 612,1282, 626,1272,
  641,1284, 659,1280, 692,1284, 737,1278, 757,1283, 770,1284, 790,1272, 792,1277, 804,1285, 838,1284, 852,1281, 866,1285, 892,1284,
  895,1284, 933,1286, 955,1281, 962,1283, 977,1277, 995,1285, 1013,1283, 1023,1276, 1056,1286, 1106,1284, 1115,1284, 1137,1284,
  1155,1283, 1160,1285, 1161,1248, 1162,1283, 1164,1285, 1179,1285, 1195,1285, 1207,1285];

function balanceAt(points, x) {
  const k = points.findIndex(p => p[0] >= x);
  const [x0, y0] = points[k - 1];
  const [x1, y1] = points[k];
  return Math.round(y0 + (y1 - y0) * (x - x0) / (x1 - x0));
}

function drawEquity() {
  const svg = document.getElementById('equity');
  svg.setAttribute('shape-rendering', 'crispEdges');

  let grid = '';
  let ticks = '';
  for (let x = 65.5; x < 1219; x += 40) {
    grid += `M${x} 612V1156M${x} 1160V1291`;
    ticks += `M${x} 1292v2`;
  }
  for (let y = 635.5; y < 1156; y += 40) {
    grid += `M26 ${y}H1219`;
    ticks += `M1219 ${y}h2`;
  }
  add(svg, 'path', { d: grid, stroke: '#c8c8c8', 'stroke-dasharray': '4 3', fill: 'none' });

  const points = balance.split(' ').map(p => p.split(',').map(Number));
  let d = '';
  for (let i = 0; i < dips.length; i += 2) {
    d += `M${dips[i] + 0.5} ${balanceAt(points, dips[i])}V${dips[i + 1]}`;
  }
  add(svg, 'path', { d: d, stroke: '#00a800', fill: 'none' });
  add(svg, 'polyline', { points: balance, stroke: '#0000a8', 'stroke-width': 2, fill: 'none' });

  d = '';
  for (let x = 27; x < 1218; x++) {
    const busy = x < 480 ? 0.25 : 0.9;
    if (rnd() < busy) d += `M${x + 0.5} 1291v${rnd() < 0.07 ? -4 : rnd() < 0.2 ? -2 : -1}`;
  }
  for (let i = 0; i < lots.length; i += 2) d += `M${lots[i] + 0.5} 1291V${lots[i + 1]}`;
  add(svg, 'path', { d: d, stroke: '#00a800', fill: 'none' });

  add(svg, 'path', { d: 'M25.500 611.500H1219.500V1156.500H25.500zM25.500 1158.500H1219.500V1292.500H25.500z' + ticks, stroke: '#000', fill: 'none' });
}

drawPrice();
drawEquity();
```
